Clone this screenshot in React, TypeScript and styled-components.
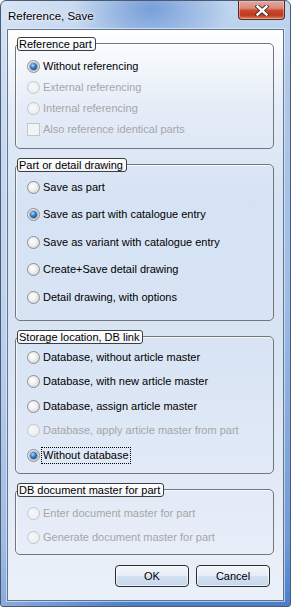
import React from "react";
import styled, { createGlobalStyle } from "styled-components";

const GlobalStyle = createGlobalStyle`
  html, body {
    margin: 0;
    padding: 0;
    background: #ffffff;
  }
  body {
    font-family: "Liberation Sans", Arial, sans-serif;
    font-size: 11px;
  }
`;

const Window = styled.div`
  box-sizing: border-box;
  width: 291px;
  height: 607px;
  border: 1px solid #4a5a72;
  border-radius: 6px 6px 3px 3px;
  padding: 0 6px 5px 6px;
  display: flex;
  flex-direction: column;
  background:
    radial-gradient(ellipse 80px 45px at 150px 8px, rgba(60, 115, 200, 0.55), rgba(60, 115, 200, 0) 100%),
    linear-gradient(90deg, rgba(255, 255, 255, 0.35) 0%, rgba(255, 255, 255, 0) 45%),
    linear-gradient(180deg, #c2d6ef 0px, #b0c9ea 80px, #9dbce6 300px, #6f9ad7 540px, #4a7dcb 606px);
  overflow: hidden;
`;

const TitleBar = styled.div`
  height: 28px;
  margin: 0 -6px;
  padding-left: 7px;
  padding-right: 5px;
  display: flex;
  align-items: flex-start;
  justify-content: space-between;
`;

const Title = styled.span`
  padding-top: 8px;
  line-height: 14px;
  font-size: 11.5px;
  color: #000;
  text-shadow: 0 0 6px rgba(255, 255, 255, 0.9), 0 0 2px rgba(255, 255, 255, 0.9);
`;

const CloseButton = styled.div`
  box-sizing: border-box;
  width: 47px;
  height: 19px;
  border: 1px solid #5a2b25;
  border-top: none;
  border-radius: 0 0 4px 4px;
  display: flex;
  align-items: center;
  justify-content: center;
  background: linear-gradient(
    180deg,
    #e5a79b 0%,
    #d9897a 40%,
    #c9492f 52%,
    #c0371c 78%,
    #d9825f 100%
  );
  box-shadow: inset 0 0 0 1px rgba(255, 210, 200, 0.45);
`;

const Client = styled.div`
  flex: 1;
  border: 1px solid #62738c;
  box-shadow: 0 0 0 1px rgba(235, 243, 252, 0.6);
  background: linear-gradient(
    180deg,
    #ffffff 0%,
    #e4ecf7 14%,
    #d6e3f4 30%,
    #d8e4f4 55%,
    #e2eaf7 80%,
    #ebf1f9 100%
  );
  padding: 7px 9px 0 7px;
  display: flex;
  flex-direction: column;
  gap: 9px;
`;

const Section = styled.div`
  position: relative;
  padding-top: 6px;
`;

const Legend = styled.div`
  position: absolute;
  top: 0;
  left: 2px;
  box-sizing: border-box;
  height: 14px;
  line-height: 12px;
  padding: 0 3px 0 1px;
  border: 1px solid #3e3e3e;
  border-radius: 3px;
  background: linear-gradient(180deg, #ffffff, #f1f5fb);
  color: #000;
  white-space: nowrap;
`;

const GroupBox = styled.div<{ $pt: number; $h: number }>`
  box-sizing: border-box;
  height: ${(p) => p.$h}px;
  padding-top: ${(p) => p.$pt}px;
  border: 1px solid #72777e;
  border-radius: 5px;
  box-shadow: inset 1px 1px 0 rgba(255, 255, 255, 0.7);
`;

const Row = styled.div<{ $h: number }>`
  height: ${(p) => p.$h}px;
  display: flex;
  align-items: center;
  padding-left: 11px;
  gap: 3px;
`;

const RadioMark = styled.span<{ $checked?: boolean; $disabled?: boolean }>`
  box-sizing: border-box;
  flex: none;
  width: 13px;
  height: 13px;
  border-radius: 50%;
  border: 1px solid ${(p) => (p.$disabled ? "#c3c7cc" : "#8b8e92")};
  background: ${(p) =>
    p.$disabled
      ? "radial-gradient(circle at 40% 40%, #f7f8f9 0%, #eceef0 70%, #e2e4e7 100%)"
      : "radial-gradient(circle at 40% 40%, #ffffff 0%, #f1f1f1 40%, #d9d9d9 75%, #cfcfcf 100%)"};
  display: flex;
  align-items: center;
  justify-content: center;

  &::after {
    content: "";
    display: ${(p) => (p.$checked ? "block" : "none")};
    width: 7px;
    height: 7px;
    border-radius: 50%;
    background: radial-gradient(circle at 40% 35%, #b6e0ff 0%, #3f8bd6 35%, #12427e 80%, #0b2b57 100%);
    box-shadow: 0 0 0 1px rgba(30, 50, 80, 0.35);
  }
`;

const CheckMark = styled.span<{ $disabled?: boolean }>`
  box-sizing: border-box;
  flex: none;
  width: 13px;
  height: 13px;
  border: 1px solid ${(p) => (p.$disabled ? "#c4c8cd" : "#8e8f8f")};
  background: ${(p) => (p.$disabled ? "#f2f3f4" : "#ffffff")};
`;

const Caption = styled.span<{ $disabled?: boolean; $focus?: boolean }>`
  line-height: 13px;
  white-space: nowrap;
  color: ${(p) => (p.$disabled ? "#a6a6a6" : "#000000")};
  outline: ${(p) => (p.$focus ? "1px dotted #000" : "none")};
  outline-offset: 1px;
`;

const ButtonRow = styled.div`
  margin-top: 1px;
  display: flex;
  justify-content: flex-end;
  gap: 7px;
  padding-right: 4px;
`;

const Button = styled.div`
  box-sizing: border-box;
  width: 74px;
  height: 22px;
  border: 1px solid #2c2c2c;
  border-radius: 4px;
  display: flex;
  align-items: center;
  justify-content: center;
  color: #000;
  background: linear-gradient(180deg, #f3f7fc 0%, #e5edf8 48%, #d3e0f2 52%, #c6d7ee 100%);
  box-shadow: inset 0 0 0 1px rgba(255, 255, 255, 0.6);
`;

type Option = {
  label: string;
  kind?: "radio" | "check";
  checked?: boolean;
  disabled?: boolean;
  focus?: boolean;
};

type Group = {
  title: string;
  pt: number;
  h: number;
  rowH: number;
  options: Option[];
};

const groups: Group[] = [
  {
    title: "Reference part",
    pt: 12,
    h: 106,
    rowH: 21,
    options: [
      { label: "Without referencing", checked: true },
      { label: "External referencing", disabled: true },
      { label: "Internal referencing", disabled: true },
      { label: "Also reference identical parts", kind: "check", disabled: true },
    ],
  },
  {
    title: "Part or detail drawing",
    pt: 8.5,
    h: 157,
    rowH: 27.5,
    options: [
      { label: "Save as part" },
      { label: "Save as part with catalogue entry", checked: true },
      { label: "Save as variant with catalogue entry" },
      { label: "Create+Save detail drawing" },
      { label: "Detail drawing, with options" },
    ],
  },
  {
    title: "Storage location, DB link",
    pt: 7.75,
    h: 138,
    rowH: 24.5,
    options: [
      { label: "Database, without article master" },
      { label: "Database, with new article master" },
      { label: "Database, assign article master" },
      { label: "Database, apply article master from part", disabled: true },
      { label: "Without database", checked: true, focus: true },
    ],
  },
  {
    title: "DB document master for part",
    pt: 11,
    h: 66,
    rowH: 24,
    options: [
      { label: "Enter document master for part", disabled: true },
      { label: "Generate document master for part", disabled: true },
    ],
  },
];

const CloseIcon = () => (
  <svg width="14" height="11" viewBox="0 0 14 11">
    <path d="M2.5 1.5 L11.5 9.5 M11.5 1.5 L2.5 9.5" stroke="#3a2a28" strokeWidth="4.2" strokeLinecap="square" />
    <path d="M2.5 1.5 L11.5 9.5 M11.5 1.5 L2.5 9.5" stroke="#ffffff" strokeWidth="2.4" strokeLinecap="square" />
  </svg>
);

export default function App() {
  return (
    <>
      <GlobalStyle />
      <Window>
        <TitleBar>
          <Title>Reference, Save</Title>
          <CloseButton>
            <CloseIcon />
          </CloseButton>
        </TitleBar>
        <Client>
          {groups.map((g) => (
            <Section key={g.title}>
              <GroupBox $pt={g.pt} $h={g.h}>
                {g.options.map((o) => (
                  <Row key={o.label} $h={g.rowH}>
                    {o.kind === "check" ? (
                      <CheckMark $disabled={o.disabled} />
                    ) : (
                      <RadioMark $checked={o.checked} $disabled={o.disabled} />
                    )}
                    <Caption $disabled={o.disabled} $focus={o.focus}>
                      {o.label}
                    </Caption>
                  </Row>
                ))}
              </GroupBox>
              <Legend>{g.title}</Legend>
            </Section>
          ))}
          <ButtonRow>
            <Button>OK</Button>
            <Button>Cancel</Button>
          </ButtonRow>
        </Client>
      </Window>
    </>
  );
}
